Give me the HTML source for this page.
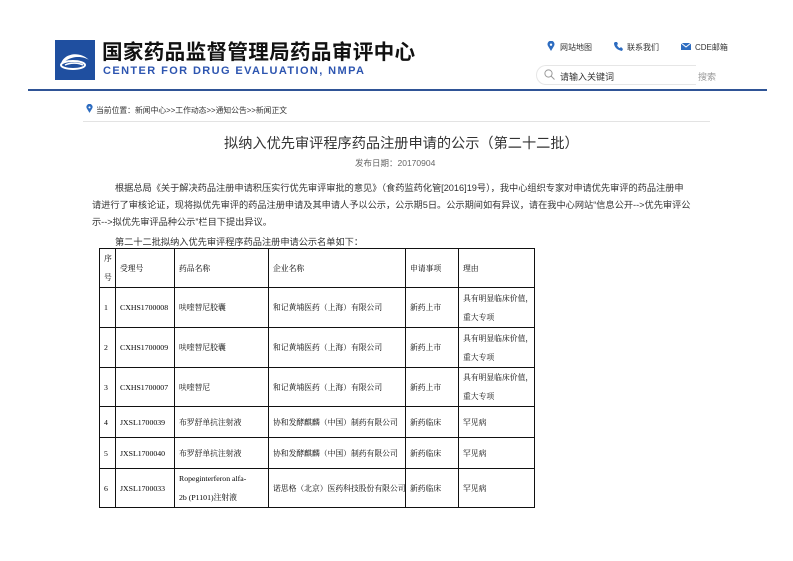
<!DOCTYPE html>
<html><head><meta charset="utf-8">
<style>
*{margin:0;padding:0;box-sizing:border-box}
body{width:793px;height:561px;background:#fff;position:relative;overflow:hidden;font-family:"Liberation Sans","Noto Sans CJK SC",sans-serif;color:#333}
.a{position:absolute;white-space:nowrap}
table{position:absolute;left:99px;top:248px;width:435px;table-layout:fixed;border-collapse:collapse;font-family:"Liberation Serif","Noto Serif CJK SC",serif;font-size:7.8px;color:#000}
td{border:1.3px solid #111;padding:0 0 0 4px;vertical-align:middle;line-height:19px;white-space:nowrap;overflow:hidden}
</style></head><body>
<svg class="a" style="left:55px;top:40px" width="40" height="40" viewBox="0 0 40 40">
<rect width="40" height="40" fill="#1f4fa0"/>
<path d="M6 24 C8 14 24 10 34 20 C30 17 20 15 12 20 Z" fill="#fff"/>
<ellipse cx="18" cy="25" rx="12" ry="4" fill="none" stroke="#fff" stroke-width="2"/>
<path d="M10 25 C16 22 24 23 28 25" fill="none" stroke="#fff" stroke-width="1.5"/>
</svg>
<div class="a" style="left:102px;top:37px;font-size:20.6px;font-weight:bold;color:#111;letter-spacing:0.3px;font-family:'Noto Sans CJK SC',sans-serif;line-height:26px">国家药品监督管理局药品审评中心</div>
<div class="a" style="left:103px;top:65px;font-size:11px;font-weight:bold;color:#2d55b0;letter-spacing:1.4px">CENTER FOR DRUG EVALUATION, NMPA</div>

<svg class="a" style="left:547px;top:41px" width="8" height="10" viewBox="0 0 8 10"><path d="M4 10 L1 5 A3.5 3.5 0 1 1 7 5 Z" fill="#2d6cc0"/><circle cx="4" cy="3.7" r="1.2" fill="#fff"/></svg>
<div class="a" style="left:560px;top:42px;font-size:8px;color:#333">网站地图</div>
<svg class="a" style="left:613px;top:41px" width="10" height="10" viewBox="0 0 10 10"><path d="M2 1 L4 1 L5 3 L4 4 C5 6 6 7 7 7 L8 6 L10 8 L9 10 C4 9 1 6 1 2 Z" fill="#2d6cc0"/></svg>
<div class="a" style="left:627px;top:42px;font-size:8px;color:#333">联系我们</div>
<svg class="a" style="left:681px;top:43px" width="10" height="7" viewBox="0 0 10 7"><rect width="10" height="7" fill="#2d6cc0"/><path d="M0 0 L5 4 L10 0" stroke="#fff" fill="none" stroke-width="1"/></svg>
<div class="a" style="left:695px;top:42px;font-size:8px;color:#333">CDE邮箱</div>

<div class="a" style="left:536px;top:65px;width:160px;height:20px;border:1px solid #e6e6e6;border-right:none;border-radius:10px 0 0 10px"></div>
<svg class="a" style="left:544px;top:69px" width="11" height="11" viewBox="0 0 11 11"><circle cx="4.5" cy="4.5" r="3.6" fill="none" stroke="#999" stroke-width="1"/><path d="M7 7 L10.5 10.5" stroke="#999" stroke-width="1"/></svg>
<div class="a" style="left:560px;top:70px;font-size:9px;color:#333">请输入关键词</div>
<div class="a" style="left:698px;top:70px;font-size:9px;color:#999">搜索</div>

<div class="a" style="left:28px;top:89px;width:739px;height:2px;background:#2f5496"></div>

<svg class="a" style="left:86px;top:104px" width="7" height="9" viewBox="0 0 8 10"><path d="M4 10 L1 5 A3.5 3.5 0 1 1 7 5 Z" fill="#2d6cc0"/><circle cx="4" cy="3.7" r="1.2" fill="#fff"/></svg>
<div class="a" style="left:96px;top:105px;font-size:7.8px;color:#333">当前位置：新闻中心&gt;&gt;工作动态&gt;&gt;通知公告&gt;&gt;新闻正文</div>
<div class="a" style="left:83px;top:121px;width:627px;height:1px;background:#e3e3e3"></div>

<div class="a" style="left:224px;top:133px;font-size:14.2px;color:#333">拟纳入优先审评程序药品注册申请的公示（第二十二批）</div>
<div class="a" style="left:355px;top:157px;font-size:8.5px;color:#666">发布日期：20170904</div>

<div class="a" style="left:115px;top:180px;font-size:9.2px;color:#333">根据总局《关于解决药品注册申请积压实行优先审评审批的意见》（食药监药化管[2016]19号），我中心组织专家对申请优先审评的药品注册申</div>
<div class="a" style="left:92px;top:197px;font-size:9.2px;color:#333">请进行了审核论证，现将拟优先审评的药品注册申请及其申请人予以公示，公示期5日。公示期间如有异议，请在我中心网站“信息公开--&gt;优先审评公</div>
<div class="a" style="left:92px;top:214px;font-size:9.2px;color:#333">示--&gt;拟优先审评品种公示”栏目下提出异议。</div>
<div class="a" style="left:115px;top:234px;font-size:9.2px;color:#333">第二十二批拟纳入优先审评程序药品注册申请公示名单如下：</div>

<table>
<colgroup><col style="width:16px"><col style="width:59px"><col style="width:94px"><col style="width:137px"><col style="width:53px"><col style="width:76px"></colgroup>
<tr style="height:39px"><td>序<br>号</td><td>受理号</td><td>药品名称</td><td>企业名称</td><td>申请事项</td><td>理由</td></tr>
<tr style="height:40px"><td>1</td><td>CXHS1700008</td><td>呋喹替尼胶囊</td><td>和记黄埔医药（上海）有限公司</td><td>新药上市</td><td>具有明显临床价值，<br>重大专项</td></tr>
<tr style="height:40px"><td>2</td><td>CXHS1700009</td><td>呋喹替尼胶囊</td><td>和记黄埔医药（上海）有限公司</td><td>新药上市</td><td>具有明显临床价值，<br>重大专项</td></tr>
<tr style="height:39px"><td>3</td><td>CXHS1700007</td><td>呋喹替尼</td><td>和记黄埔医药（上海）有限公司</td><td>新药上市</td><td>具有明显临床价值，<br>重大专项</td></tr>
<tr style="height:31px"><td>4</td><td>JXSL1700039</td><td>布罗舒单抗注射液</td><td>协和发酵麒麟（中国）制药有限公司</td><td>新药临床</td><td>罕见病</td></tr>
<tr style="height:31px"><td>5</td><td>JXSL1700040</td><td>布罗舒单抗注射液</td><td>协和发酵麒麟（中国）制药有限公司</td><td>新药临床</td><td>罕见病</td></tr>
<tr style="height:39px"><td>6</td><td>JXSL1700033</td><td>Ropeginterferon alfa-<br>2b (P1101)注射液</td><td>诺思格（北京）医药科技股份有限公司</td><td>新药临床</td><td>罕见病</td></tr>
</table>
</body></html>
